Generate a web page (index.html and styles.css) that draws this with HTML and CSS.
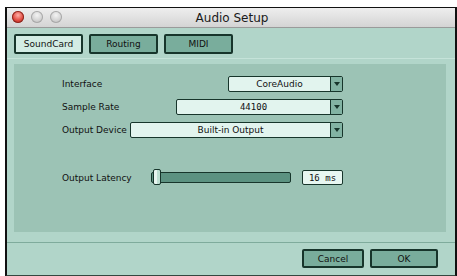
FILE: index.html
```html
<!DOCTYPE html>
<html>
<head>
<meta charset="utf-8">
<link rel="stylesheet" href="styles.css">
</head>
<body>
<div class="window">
  <div class="titlebar">
    <div class="lights">
      <span class="light red"></span>
      <span class="light"></span>
      <span class="light"></span>
    </div>
    <div class="title">Audio Setup</div>
  </div>
  <div class="content">
    <div class="tabs">
      <div class="tab active">SoundCard</div>
      <div class="tab">Routing</div>
      <div class="tab">MIDI</div>
    </div>
    <div class="sep"></div>
    <div class="panel">
      <div class="rows">
        <div class="row">
          <span class="label">Interface</span>
          <div class="select w-iface"><span class="field">CoreAudio</span><span class="arrow"></span></div>
        </div>
        <div class="row">
          <span class="label">Sample Rate</span>
          <div class="select w-rate"><span class="field mono">44100</span><span class="arrow"></span></div>
        </div>
        <div class="row">
          <span class="label">Output Device</span>
          <div class="select w-dev"><span class="field">Built-in Output</span><span class="arrow"></span></div>
        </div>
        <div class="row latency">
          <span class="label lat-label">Output Latency</span>
          <div class="slider"><span class="thumb"></span></div>
          <div class="value mono">16 ms</div>
        </div>
      </div>
    </div>
    <div class="footer">
      <div class="btn">Cancel</div>
      <div class="btn">OK</div>
    </div>
  </div>
</div>
</body>
</html>
```

FILE: styles.css
```css
html, body {
  margin: 0;
  padding: 0;
  background: #ffffff;
}
body {
  width: 457px;
  height: 276px;
  overflow: hidden;
  font-family: "DejaVu Sans", "Liberation Sans", sans-serif;
}
.window {
  margin: 7px 0 0 5px;
  width: 448px;
  height: 267px;
  border: 2px solid #111;
  border-top-width: 1px;
  border-bottom-color: #34473f;
  display: flex;
  flex-direction: column;
}
.titlebar {
  height: 19px;
  background: linear-gradient(#eeeeee, #d4d4d4);
  border-bottom: 1px solid #9a9a9a;
  position: relative;
  display: flex;
  align-items: center;
  justify-content: center;
}
.lights {
  position: absolute;
  left: 5px;
  top: 3px;
  display: flex;
  gap: 7px;
}
.light {
  width: 12px;
  height: 12px;
  border-radius: 50%;
  background: radial-gradient(circle at 50% 35%, #f4f4f4, #cfcfcf 60%, #b8b8b8);
  box-shadow: inset 0 0 0 1px #a9a9a9;
}
.light.red {
  background: radial-gradient(circle at 50% 35%, #ffb0a8, #e0473c 55%, #a82a22);
  box-shadow: inset 0 0 0 1px #8c2a22;
}
.title {
  font-family: "DejaVu Sans", sans-serif;
  font-size: 12px;
  color: #1a1a1a;
  margin-left: 2px;
}
.content {
  flex: 1;
  background: #b1d5c9;
  display: flex;
  flex-direction: column;
}
.tabs {
  display: flex;
  gap: 6px;
  padding: 6px 0 0 7px;
}
.tab {
  width: 65px;
  height: 16px;
  border: 2px solid #17352b;
  border-radius: 2px;
  background: #79ad9c;
  font-size: 9px;
  color: #111;
  display: flex;
  align-items: center;
  justify-content: center;
}
.tab.active {
  background: #d3ece4;
}
.sep {
  margin-top: 4px;
  height: 1px;
  background: #c5e3d9;
}
.panel {
  margin: 5px 0 0 7px;
  width: 432px;
  height: 168px;
  background: #9cc3b5;
  box-sizing: border-box;
  padding: 11px 0 0 48px;
}
.rows {
  width: 281px;
  display: flex;
  flex-direction: column;
}
.row {
  display: flex;
  align-items: center;
  justify-content: space-between;
  height: 17px;
  margin-bottom: 6px;
}
.row.latency {
  margin-top: 25px;
  justify-content: flex-start;
}
.label {
  font-size: 9px;
  color: #111;
  white-space: nowrap;
}
.lat-label {
  flex: 0 0 89px;
}
.mono {
  font-family: "DejaVu Sans Mono", "Liberation Mono", monospace;
}
.select {
  display: flex;
  height: 16px;
  border: 1.5px solid #17352b;
  border-radius: 2px;
  box-sizing: border-box;
  background: #e2f4ee;
}
.w-iface { width: 115px; }
.w-rate { width: 167px; }
.w-dev { width: 213px; }
.field {
  flex: 1;
  font-size: 9px;
  color: #111;
  display: flex;
  align-items: center;
  justify-content: center;
}
.arrow {
  width: 11px;
  border-left: 1.5px solid #17352b;
  background: #82b3a3;
  position: relative;
}
.arrow::after {
  content: "";
  position: absolute;
  left: 3px;
  top: 5px;
  border-left: 3px solid transparent;
  border-right: 3px solid transparent;
  border-top: 4px solid #17352b;
}
.slider {
  flex: 0 0 140px;
  height: 11px;
  box-sizing: border-box;
  border: 1.5px solid #17352b;
  border-radius: 2px;
  background: #5c9281;
  position: relative;
}
.thumb {
  position: absolute;
  left: 1px;
  top: -4px;
  width: 8px;
  height: 16px;
  box-sizing: border-box;
  border: 1.5px solid #17352b;
  border-radius: 2px;
  background: linear-gradient(90deg, #e8f6f0 0 50%, #bfe0d3 50%);
}
.value {
  margin-left: 11px;
  flex: 0 0 41px;
  height: 15px;
  box-sizing: border-box;
  border: 1.5px solid #17352b;
  border-radius: 2px;
  background: #e8f7f1;
  font-size: 9px;
  color: #111;
  display: flex;
  align-items: center;
  justify-content: center;
}
.footer {
  margin-top: 10px;
  border-top: 1px solid #7fab9c;
  flex: 1;
  display: flex;
  justify-content: flex-end;
  align-items: flex-start;
  gap: 6px;
  padding: 6px 17px 0 0;
}
.btn {
  width: 58px;
  height: 15px;
  border: 2px solid #17352b;
  border-radius: 2px;
  background: #79ad9c;
  font-size: 9px;
  color: #111;
  display: flex;
  align-items: center;
  justify-content: center;
}
.btn + .btn {
  width: 64px;
}
```
